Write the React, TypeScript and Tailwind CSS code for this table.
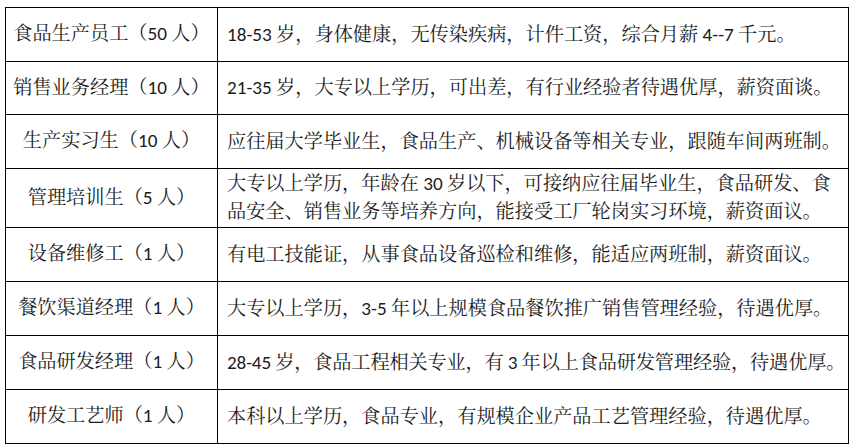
import React from "react";

const rows: { role: string; desc: React.ReactNode; h: string; tight?: boolean }[] = [
  { role: "食品生产员工（50 人）", desc: "18-53 岁，身体健康，无传染疾病，计件工资，综合月薪 4--7 千元。", h: "h-[54px]" },
  { role: "销售业务经理（10 人）", desc: "21-35 岁，大专以上学历，可出差，有行业经验者待遇优厚，薪资面谈。", h: "h-[53px]" },
  { role: "生产实习生（10 人）", desc: "应往届大学毕业生，食品生产、机械设备等相关专业，跟随车间两班制。", h: "h-[54px]" },
  {
    role: "管理培训生（5 人）",
    desc: (
      <>
        大专以上学历，年龄在 30 岁以下，可接纳应往届毕业生，食品研发、食
        <br />
        品安全、销售业务等培养方向，能接受工厂轮岗实习环境，薪资面议。
      </>
    ),
    h: "h-[59px]",
  },
  { role: "设备维修工（1 人）", desc: "有电工技能证，从事食品设备巡检和维修，能适应两班制，薪资面议。", h: "h-[54px]" },
  { role: "餐饮渠道经理（1 人）", desc: "大专以上学历，3-5 年以上规模食品餐饮推广销售管理经验，待遇优厚。", h: "h-[54px]" },
  {
    role: "食品研发经理（1 人）",
    desc: "28-45 岁，食品工程相关专业，有 3 年以上食品研发管理经验，待遇优厚。",
    h: "h-[54px]",
    tight: true,
  },
  { role: "研发工艺师（1 人）", desc: "本科以上学历，食品专业，有规模企业产品工艺管理经验，待遇优厚。", h: "h-[54px]" },
];

export default function App() {
  return (
    <div
      className="w-[858px] h-[448px] bg-white pt-[7px] pl-[5px]"
      style={{ fontFamily: 'Carlito, Lato, "Noto Serif CJK SC", "Noto Sans CJK SC", sans-serif' }}
    >
      <table className="border-collapse w-[844px] table-fixed text-[19.2px] text-[#1c1c1c]">
        <colgroup>
          <col className="w-[212px]" />
          <col />
        </colgroup>
        <tbody>
          {rows.map((r) => (
            <tr key={r.role} className={r.h}>
              <td className="border border-black text-center align-middle p-0 whitespace-nowrap">{r.role}</td>
              <td
                className={
                  r.tight
                    ? "border border-black align-middle pl-[9px] pr-0 py-0 leading-[28px] whitespace-nowrap tracking-[-0.15px]"
                    : "border border-black align-middle pl-[9px] pr-0 py-0 leading-[28px] whitespace-nowrap"
                }
              >
                {r.desc}
              </td>
            </tr>
          ))}
        </tbody>
      </table>
    </div>
  );
}
